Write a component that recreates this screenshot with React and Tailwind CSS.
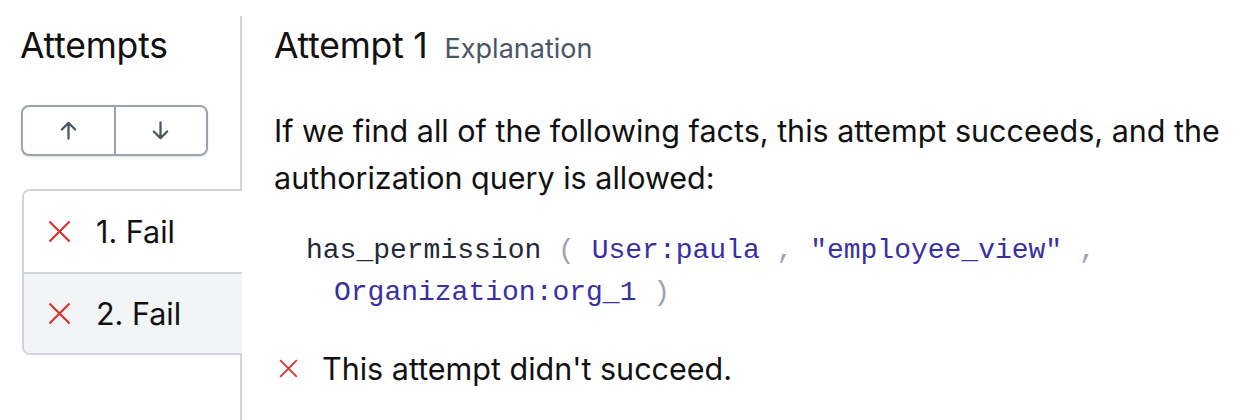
import React, { useState } from "react";

const XMark = ({ className }) => (
  <svg viewBox="0 0 24 24" fill="none" stroke="currentColor" strokeWidth="2.3" className={className}>
    <path d="M1.5 1.5l21 21M22.5 1.5l-21 21" />
  </svg>
);

const ArrowUp = () => (
  <svg viewBox="0 0 20 20" fill="none" stroke="currentColor" strokeWidth="2.4" className="w-[19px] h-[19px]">
    <path d="M10 18.5V2M3 9l7-7 7 7" strokeLinecap="round" strokeLinejoin="round" />
  </svg>
);

const ArrowDown = () => (
  <svg viewBox="0 0 20 20" fill="none" stroke="currentColor" strokeWidth="2.4" className="w-[19px] h-[19px]">
    <path d="M10 1.5V18M3 11l7 7 7-7" strokeLinecap="round" strokeLinejoin="round" />
  </svg>
);

const App = () => {
  const [selected, setSelected] = useState(1);
  const attempts = [
    { id: 0, label: "1. Fail" },
    { id: 1, label: "2. Fail" },
  ];

  return (
    <div className="h-[420px] w-[1260px] bg-white flex pt-4 overflow-hidden font-['Inter','Noto_Sans',sans-serif] text-[#111]">
      {/* sidebar */}
      <div className="w-[242px] shrink-0 border-r-2 border-[#d1d5db] flex flex-col">
        <h2 className="pl-[20px] pt-[10px] text-[35.5px] leading-[40px] tracking-[-0.2px]">Attempts</h2>
        <div className="ml-[21px] mt-[39px] w-[187px] h-[51px] flex border-2 border-[#9ca3af] rounded-lg shadow-sm overflow-hidden">
          <button className="flex-1 flex items-center justify-center text-[#4b5563] border-r-2 border-[#9ca3af]">
            <ArrowUp />
          </button>
          <button className="flex-1 flex items-center justify-center text-[#4b5563]">
            <ArrowDown />
          </button>
        </div>
        <div className="ml-[22px] mr-[-2px] mt-[33px] border-2 border-r-0 border-[#d1d5db] rounded-l-lg overflow-hidden">
          {attempts.map((a, i) => (
            <div
              key={a.id}
              onClick={() => setSelected(a.id)}
              className={`h-[81px] flex items-center pl-[24px] gap-[25px] text-[30.5px] cursor-pointer ${
                i > 0 ? "border-t-2 border-[#d1d5db]" : ""
              } ${selected === a.id ? "bg-[#f3f4f6]" : "bg-white"}`}
            >
              <XMark className="w-[23px] h-[23px] text-[#d9342b]" />
              <span>{a.label}</span>
            </div>
          ))}
        </div>
      </div>

      {/* content */}
      <div className="flex-1 pl-[32px] pr-4">
        <div className="flex items-baseline gap-[17px] pt-[10px]">
          <h2 className="text-[35.5px] leading-[40px] tracking-[-0.2px]">Attempt 1</h2>
          <span className="text-[27px] text-[#4b5563]">Explanation</span>
        </div>
        <p className="mt-[37px] text-[30.5px] leading-[47px]">
          If we find all of the following facts, this attempt succeeds, and the authorization query is allowed:
        </p>
        <div className="mt-[29px] pl-[32px] text-[28px] whitespace-pre flex flex-col font-['Liberation_Mono',monospace]">
          <div className="h-[42px] flex items-center leading-normal">
            <span className="text-[#1f2937]">has_permission</span>
            <span className="text-[#9ca3af]"> ( </span>
            <span className="text-[#3730a3]">User:paula</span>
            <span className="text-[#9ca3af]"> , </span>
            <span className="text-[#3730a3]">"employee_view"</span>
            <span className="text-[#9ca3af]"> ,</span>
          </div>
          <div className="h-[42px] flex items-center leading-normal pl-[28px]">
            <span className="text-[#3730a3]">Organization:org_1</span>
            <span className="text-[#9ca3af]"> )</span>
          </div>
        </div>
        <div className="mt-[35px] flex items-center gap-[24px] text-[30.5px] leading-[40px]">
          <XMark className="w-[19px] h-[19px] text-[#d9342b] ml-[5px]" />
          <span>This attempt didn't succeed.</span>
        </div>
      </div>
    </div>
  );
};

export default App;
